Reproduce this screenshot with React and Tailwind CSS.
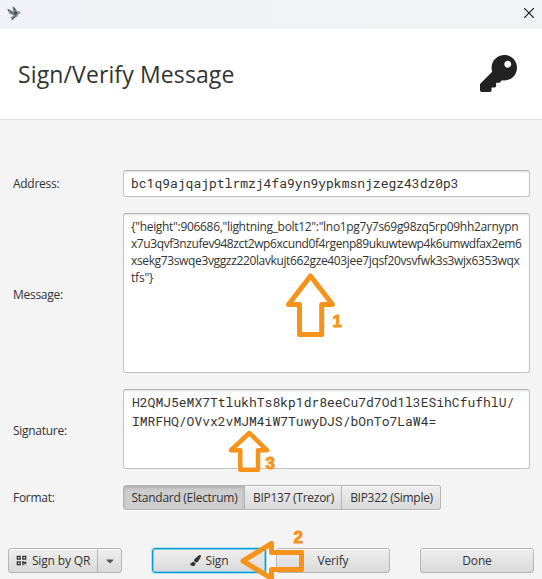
import React, { useState } from 'react';
import { FaKey, FaPaintBrush, FaQrcode, FaCaretDown } from 'react-icons/fa';

const ADDRESS = 'bc1q9ajqajptlrmzj4fa9yn9ypkmsnjzegz43dz0p3';

const MESSAGE_LINES = [
  { text: '{"height":906686,"lightning_bolt12":"lno1pg7y7s69g98zq5rp09hh2arnypn', tracking: 'tracking-[-0.31px]' },
  { text: 'x7u3qvf3nzufev948zct2wp6xcund0f4rgenp89ukuwtewp4k6umwdfax2em6', tracking: 'tracking-[-0.41px]' },
  { text: 'xsekg73swqe3vggzz220lavkujt662gze403jee7jqsf20vsvfwk3s3wjx6353wqx', tracking: 'tracking-[-0.36px]' },
  { text: 'tfs"}', tracking: 'tracking-[-0.2px]' },
];

const SIGNATURE_LINES = [
  'H2QMJ5eMX7TtlukhTs8kp1dr8eeCu7d7Od1l3ESihCfufhlU/',
  'IMRFHQ/OVvx2vMJM4iW7TuwyDJS/bOnTo7LaW4=',
];

const FORMATS = [
  { label: 'Standard (Electrum)', width: 'w-[122px]' },
  { label: 'BIP137 (Trezor)', width: 'w-[97px]' },
  { label: 'BIP322 (Simple)', width: 'w-[99px]' },
];

const MONO = 'font-["Roboto_Mono","DejaVu_Sans_Mono",monospace] text-[13px] tracking-normal';
const FIELD =
  'w-[407px] bg-white border border-[#c3c3c3] border-t-[#b5b5b5] rounded-[3px] shadow-[inset_0_2px_2px_-1px_#dcdcdc] px-[7px]';
const BUTTON =
  'flex items-center justify-center h-[25px] border border-[#b5b5b5] rounded-[3px] bg-linear-to-b from-[#efefef] to-[#d9d9d9] shadow-[inset_0_1px_0_#fafafa]';

const BirdLogo = () => (
  <svg width="16" height="16" viewBox="0 0 16 16">
    <path
      d="M1.200 3.800L4.500 5.200L7 6.500L6.300 1L9.500 3.200L11 6L13 6.300L15.200 7.700L12.500 9L11.500 11.500L9 12.500L7.500 14.800L4.800 15.600L6 13L3.500 13.200L7.500 10.500L3 8.500Z"
      fill="#8d9495"
    />
    <path d="M2 4.500L7.500 8.500M7.500 2.500L9.500 6.500M6 14L10 10.500" stroke="#596163" strokeWidth="1.300" />
    <circle cx="9.500" cy="8.200" r="1.700" fill="#485052" />
  </svg>
);

const Row = ({ label, tall, children }) => (
  <div className="flex items-center">
    <div className={`w-[110px] whitespace-nowrap ${tall ? 'pt-[3px]' : ''}`}>{label}</div>
    {children}
  </div>
);

const Annotations = () => (
  <svg className="absolute inset-0 pointer-events-none" width="542" height="579">
    <g fill="none" stroke="#f7931a" strokeWidth="5" strokeLinejoin="round">
      <path d="M310.500 276L332.500 304.500H321.700V334.500H299.500V304.500H288.500Z" />
      <path d="M243 561L271.500 543.500V552.500H301.500V569.500H271.500V578.500Z" />
      <path d="M249.300 433L267 450.200H258V469.700H240.300V450.200H231Z" strokeWidth="4.500" />
    </g>
    <g
      className='font-["Liberation_Sans",sans-serif] text-[17px] font-bold'
      fill="#f7931a"
      stroke="#f7931a"
      strokeWidth="0.900"
    >
      <text x="332.500" y="327">1</text>
      <text x="293.500" y="543">2</text>
      <text x="265.500" y="469">3</text>
    </g>
  </svg>
);

const App = () => {
  const [format, setFormat] = useState('Standard (Electrum)');

  return (
    <div className='relative w-[542px] h-[579px] overflow-hidden bg-[#f4f4f4] text-[#333] font-["Open_Sans",sans-serif] text-xs tracking-[-0.28px]'>
      {/* Title bar */}
      <div className="flex justify-between h-[29px] pl-[6px] pr-2 pt-[5px] bg-linear-to-r from-[#f0f2f7] to-[#f1f3f4]">
        <BirdLogo />
        <svg width="10" height="10" viewBox="0 0 10 10" className="mt-[3px]">
          <path d="M0 0L10 10M10 0L0 10" stroke="#1a1a1a" strokeWidth="1.200" />
        </svg>
      </div>

      {/* Header */}
      <div className="flex items-center justify-between h-[91px] bg-white border-b border-[#dfdfdf] pl-[18px] pr-[25px]">
        <h1 className="text-[23px] leading-8 tracking-[0.12px]">Sign/Verify Message</h1>
        <FaKey className="mb-[2px] text-[37px] text-[#222]" />
      </div>

      {/* Form */}
      <div className="flex flex-col gap-4 pt-[50px] pl-[13px]">
        <Row label="Address:">
          <div className={`${FIELD} ${MONO} h-[27px] leading-[25px]`}>{ADDRESS}</div>
        </Row>
        <Row label="Message:" tall>
          <div className={`${FIELD} h-[160px] pt-1 leading-[17px]`}>
            {MESSAGE_LINES.map(({ text, tracking }) => (
              <div key={text} className={`whitespace-nowrap ${tracking}`}>{text}</div>
            ))}
          </div>
        </Row>
        <Row label="Signature:" tall>
          <div className={`${FIELD} ${MONO} h-[80px] pt-[3px] pl-2 leading-[19px]`}>
            {SIGNATURE_LINES.map((line) => (
              <div key={line} className="whitespace-nowrap">{line}</div>
            ))}
          </div>
        </Row>
        <Row label="Format:">
          <div className="flex rounded-[3px] shadow-[0_1px_0_#fbfbfb]">
            {FORMATS.map(({ label, width }, idx) => (
              <button
                key={label}
                onClick={() => setFormat(label)}
                className={`h-[25px] pl-px whitespace-nowrap border-y border-r border-[#b5b5b5] ${width} ${
                  idx === 0 ? 'border-l rounded-l-[3px]' : ''
                } ${idx === FORMATS.length - 1 ? 'rounded-r-[3px]' : ''} ${
                  format === label
                    ? 'bg-[#cecece] shadow-[inset_0_2px_3px_#b0b0b0]'
                    : 'bg-linear-to-b from-[#efefef] to-[#d9d9d9] shadow-[inset_0_1px_0_#fafafa]'
                }`}
              >
                {label}
              </button>
            ))}
          </div>
        </Row>
      </div>

      {/* Buttons */}
      <div className="flex pt-[38px] pl-2 tracking-[-0.15px]">
        <div className={`${BUTTON} w-[114px]`}>
          <div className="flex items-center justify-center gap-[5px] w-[89px] whitespace-nowrap">
            <FaQrcode className="text-[11px]" /> Sign by QR
          </div>
          <div className="flex items-center justify-center w-[24px] h-full border-l border-[#b5b5b5]">
            <FaCaretDown className="text-xs text-[#555]" />
          </div>
        </div>
        <button className="flex items-center justify-center gap-[5px] w-[114px] h-[25px] ml-[30px] rounded-[3px] border border-[#039ed3] bg-linear-to-b from-[#efefef] to-[#d9d9d9] shadow-[0_0_0_1px_#b5dfee,inset_0_0_0_1px_#7ecbe6]">
          <FaPaintBrush className="text-[11px]" /> Sign
        </button>
        <button className={`${BUTTON} w-[114px] ml-[10px]`}>Verify</button>
        <button className={`${BUTTON} w-[114px] ml-[30px]`}>Done</button>
      </div>

      <Annotations />
    </div>
  );
};

export default App;
